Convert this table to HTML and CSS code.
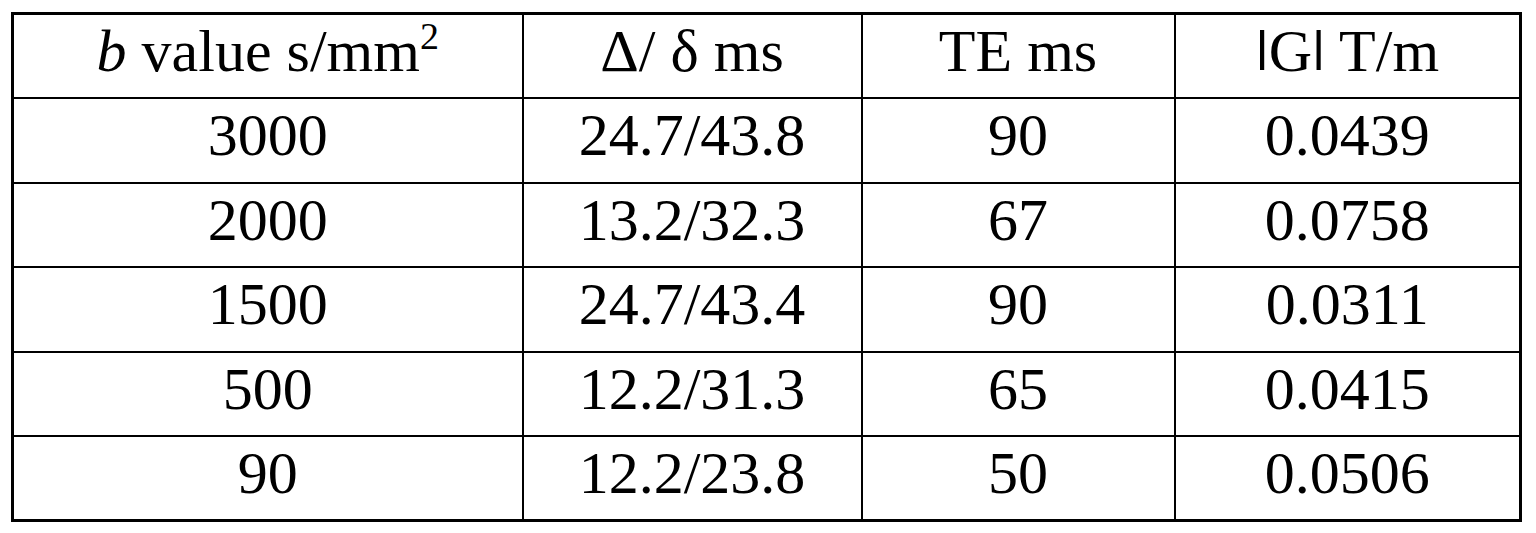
FILE: index.html
```html
<!DOCTYPE html>
<html lang="en">
<head>
  <meta charset="UTF-8" />
  <title>Diffusion parameters</title>
  <link rel="stylesheet" href="styles.css">
</head>
<body>
  <!-- Tabla de parametros -->
  <div class="wrap">
    <table class="params">
      <colgroup>
        <col class="col-b">
        <col class="col-delta">
        <col class="col-te">
        <col class="col-g">
      </colgroup>
      <tr class="head">
        <td><i>b</i> value s/mm<sup>2</sup></td>
        <td>&Delta;/ &delta; ms</td>
        <td>TE ms</td>
        <td><span class="bar">|</span>G<span class="bar">|</span> T/m</td>
      </tr>
      <tr><td>3000</td><td>24.7/43.8</td><td>90</td><td>0.0439</td></tr>
      <tr><td>2000</td><td>13.2/32.3</td><td>67</td><td>0.0758</td></tr>
      <tr><td>1500</td><td>24.7/43.4</td><td>90</td><td>0.0311</td></tr>
      <tr><td>500</td><td>12.2/31.3</td><td>65</td><td>0.0415</td></tr>
      <tr><td>90</td><td>12.2/23.8</td><td>50</td><td>0.0506</td></tr>
    </table>
  </div>
</body>
</html>
```

FILE: styles.css
```css
* {
  box-sizing: border-box;
}

body {
  margin: 0;
  background: #fff;
  color: #000;
  font-family: "Liberation Serif", "Times New Roman", serif;
}

.wrap {
  padding: 12px 0 0 11px;
}

.params {
  border-collapse: collapse;
  table-layout: fixed;
  width: 1511px;
  border: 3px solid #000;
}

.col-b {
  width: 510px;
}

.col-delta {
  width: 339px;
}

.col-te {
  width: 313px;
}

.col-g {
  width: 346px;
}

.params tr {
  height: 84.5px;
}

.params td {
  border: 2px solid #000;
  padding: 2px 0 0;
  font-size: 60px;
  line-height: 69px;
  text-align: center;
  vertical-align: top;
  white-space: nowrap;
}

.params sup {
  font-size: 38px;
  line-height: 0;
  vertical-align: 22px;
}

.bar {
  display: inline-block;
  line-height: 1;
  font-weight: bold;
  transform-origin: 50% 13px;
  transform: scaleY(0.741);
}
```
